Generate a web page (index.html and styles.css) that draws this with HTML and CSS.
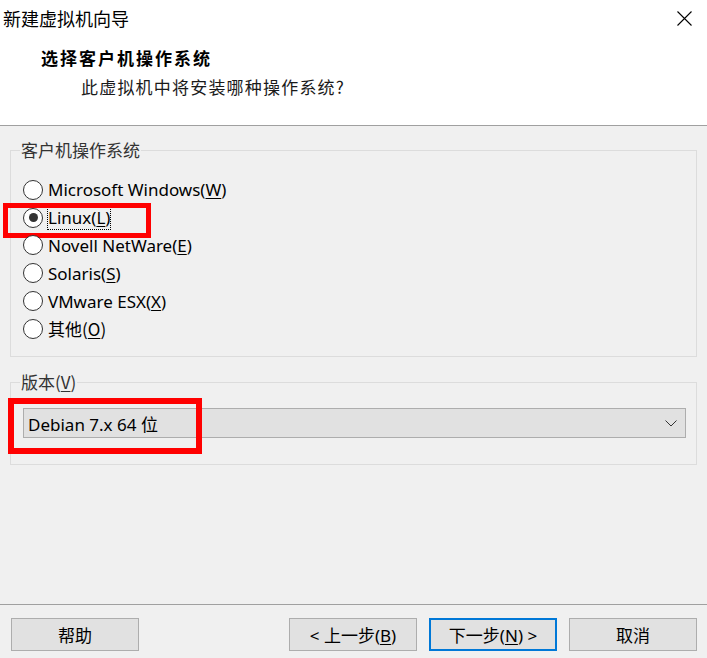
FILE: index.html
```html
<!DOCTYPE html>
<html lang="zh-CN">
<head>
    <meta charset="utf-8">
    <title>新建虚拟机向导</title>
    <link rel="stylesheet" href="styles.css">
</head>
<body>
    <div class="window">
        <div class="header">
            <div class="titlebar">
                <span class="title">新建虚拟机向导</span>
                <svg class="close" width="15" height="15" viewBox="0 0 15 15">
                    <path d="M0.5 0.5 L14.5 14.5 M14.5 0.5 L0.5 14.5" stroke="#000" stroke-width="1.1" fill="none"/>
                </svg>
            </div>
            <div class="heading">选择客户机操作系统</div>
            <div class="subheading">此虚拟机中将安装哪种操作系统?</div>
        </div>

        <div class="content">
            <fieldset class="group group-os">
                <legend>客户机操作系统</legend>
                <div class="radios">
                    <div class="radio"><span class="dot"></span><span>Microsoft Windows(<u>W</u>)</span></div>
                    <div class="radio checked">
                        <span class="dot"></span><span class="focus">Linux(<u>L</u>)</span>
                        <span class="mark mark-linux"></span>
                    </div>
                    <div class="radio"><span class="dot"></span><span>Novell NetWare(<u>E</u>)</span></div>
                    <div class="radio"><span class="dot"></span><span>Solaris(<u>S</u>)</span></div>
                    <div class="radio"><span class="dot"></span><span>VMware ESX(<u>X</u>)</span></div>
                    <div class="radio"><span class="dot"></span><span class="cjk">其他(<u>O</u>)</span></div>
                </div>
            </fieldset>

            <fieldset class="group group-version">
                <legend>版本(<u>V</u>)</legend>
                <div class="select">
                    <span>Debian 7.x 64 <span class="cjk">位</span></span>
                    <svg width="12" height="7" viewBox="0 0 12 7">
                        <path d="M0.5 0.5 L6 6 L11.5 0.5" stroke="#333" stroke-width="1" fill="none"/>
                    </svg>
                    <span class="mark mark-select"></span>
                </div>
            </fieldset>
        </div>

        <div class="footer">
            <button class="btn">帮助</button>
            <div class="nav">
                <button class="btn">&lt; 上一步(<u>B</u>)</button>
                <button class="btn primary">下一步(<u>N</u>) &gt;</button>
                <button class="btn">取消</button>
            </div>
        </div>
    </div>
</body>
</html>
```

FILE: styles.css
```css
* {
    box-sizing: border-box;
}

body {
    margin: 0;
    background: #f0f0f0;
    font-family: "Noto Sans", "Noto Sans CJK SC", sans-serif;
    color: #000;
}

.window {
    width: 707px;
    height: 658px;
    display: flex;
    flex-direction: column;
    background: #f0f0f0;
}

.header {
    height: 126px;
    background: #fff;
    border-bottom: 1px solid #a0a0a0;
}

.titlebar {
    height: 36px;
    display: flex;
    justify-content: space-between;
    align-items: center;
    padding: 0 15px 0 3px;
}

.title {
    font-family: "Noto Sans CJK SC", sans-serif;
    font-size: 18px;
    line-height: 20px;
}

.heading {
    margin: 11px 0 0 41px;
    font-family: "Noto Sans CJK SC", sans-serif;
    font-weight: bold;
    font-size: 17px;
    letter-spacing: 2px;
    line-height: 22px;
}

.subheading {
    margin: 7px 0 0 81px;
    font-family: "Noto Sans CJK SC", sans-serif;
    font-size: 17px;
    letter-spacing: 1.2px;
    line-height: 22px;
    color: #1a1a1a;
}

.content {
    padding: 14px 10px 0 10px;
    display: flex;
    flex-direction: column;
    gap: 15px;
    flex: 1;
}

.group {
    margin: 0;
    border: 1px solid #dcdcdc;
    padding: 0 10px 0 12px;
}

.group legend {
    margin-left: -3px;
    padding: 0 1px;
    font-family: "Noto Sans CJK SC", sans-serif;
    font-size: 17px;
    line-height: 20px;
    color: #333;
}

.group-os {
    height: 217px;
}

.radios {
    padding-top: 16px;
    display: flex;
    flex-direction: column;
}

.radio {
    position: relative;
    height: 27.8px;
    display: flex;
    align-items: center;
    gap: 5px;
    font-size: 17px;
}

.radio .dot {
    flex: none;
    width: 20px;
    height: 20px;
    border: 1px solid #333;
    border-radius: 50%;
    background: #fff;
    display: flex;
    align-items: center;
    justify-content: center;
}

.radio.checked .dot::after {
    content: "";
    width: 9px;
    height: 9px;
    border-radius: 50%;
    background: #333;
}

.radio u,
.btn u,
.group legend u {
    text-underline-offset: 2px;
}

.cjk {
    font-family: "Noto Sans CJK SC", sans-serif;
}

.focus {
    outline: 1px dotted #000;
    line-height: 22px;
}

.mark {
    position: absolute;
    border: 5px solid #f00;
    pointer-events: none;
}

.mark-linux {
    left: -20px;
    top: -1px;
    width: 148px;
    height: 35px;
}

.group-version {
    height: 93px;
}

.select {
    position: relative;
    margin-top: 16px;
    height: 30px;
    border: 1px solid #adadad;
    background: #e1e1e1;
    display: flex;
    align-items: center;
    justify-content: space-between;
    padding: 0 8px 0 4px;
    font-size: 17px;
}

.mark-select {
    left: -16px;
    top: -11px;
    width: 194px;
    height: 56px;
    border-width: 6px;
}

.footer {
    border-top: 1px solid #a0a0a0;
    height: 54px;
    padding: 13px 10px 0 11px;
    display: flex;
    justify-content: space-between;
    align-items: flex-start;
}

.nav {
    display: flex;
    gap: 12px;
}

.btn {
    width: 128px;
    height: 33px;
    border: 1px solid #adadad;
    background: #e1e1e1;
    font-family: "Noto Sans", "Noto Sans CJK SC", sans-serif;
    font-size: 17px;
    color: #000;
    padding: 0;
}

.btn.primary {
    border: 2px solid #0078d7;
}
```
